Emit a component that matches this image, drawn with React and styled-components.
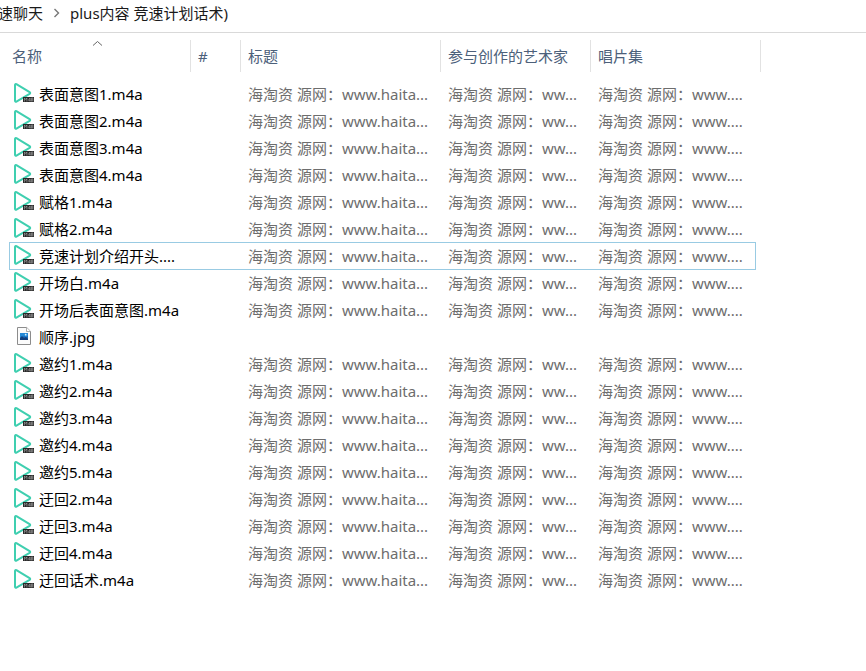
import React from "react";
import styled, { createGlobalStyle } from "styled-components";

const GlobalStyle = createGlobalStyle`
  * { box-sizing: border-box; }
  body {
    margin: 0;
    background: #fff;
    color: #000;
    font: 15px/20px "Noto Sans", "Noto Sans CJK SC", sans-serif;
  }
  button {
    padding: 0;
    border: 0;
    background: none;
    color: inherit;
    font: inherit;
  }
`;

const Window = styled.main`
  min-height: 100vh;
`;

const PathBar = styled.nav`
  display: flex;
  align-items: center;
  height: 33px;
  padding-bottom: 6px;
  margin-left: -2px;
  border-bottom: 1px solid #d9d9d9;
  color: #1a1a1a;
  white-space: nowrap;
`;

const Separator = styled.svg`
  width: 9px;
  height: 10px;
  margin: 0 9px;
`;

const FileTable = styled.table`
  width: 761px;
  margin-top: 7px;
  table-layout: fixed;
  border-collapse: separate;
  border-spacing: 0;
  white-space: nowrap;
`;

const Column = styled.col`
  width: ${(p) => p.$width}px;
`;

const HeaderCell = styled.th`
  position: relative;
  height: 32px;
  padding: 0 0 0 ${(p) => (p.$first ? 12 : 7)}px;
  border-right: 1px solid #e2e2e2;
  color: #4c607a;
  font-weight: 400;
  text-align: left;
`;

const SortArrow = styled.svg`
  position: absolute;
  top: 0;
  left: 50%;
  width: 11px;
  height: 7px;
  margin-left: -3px;
`;

const Rows = styled.tbody`
  &::before {
    content: "";
    display: table-row;
    height: 8px;
  }
`;

const Row = styled.tr`
  position: relative;
  &::after {
    content: "";
    display: ${(p) => (p.$focused ? "block" : "none")};
    position: absolute;
    inset: 0 5px -1px 9px;
    border: 1px solid #99cbe3;
    pointer-events: none;
  }
`;

const Cell = styled.td`
  height: 27px;
  padding: 0 0 0 7px;
  color: #6d6d6d;
  overflow: hidden;
`;

const NameCell = styled(Cell)`
  padding-left: 12px;
  color: #000;
`;

const FileName = styled.div`
  display: flex;
  align-items: center;
  gap: 4px;
`;

const FileIcon = styled.svg`
  flex: none;
  width: 23px;
  height: 22px;
`;

function AudioIcon() {
  return (
    <FileIcon viewBox="0 0 23 22" aria-hidden="true">
      <path
        d="M3 2v15.8c0 .9.7 1.3 1.4.8L17.6 10.8c.8-.5.8-1.2 0-1.7L4.4 1.2C3.7.8 3 1.1 3 2z"
        fill="#fff"
        stroke="#3fcfb0"
        strokeWidth="2"
        strokeLinejoin="round"
      />
      <rect x="11" y="14" width="11" height="5" fill="#292929" />
      <path
        d="M12.5 18.5v-3.5l1.2 1.5 1.2-1.5v3.5M18 18.5V15l-1.6 2.3h2.2M19.4 18.5V15h1.5v3.5M19.4 17h1.5"
        fill="none"
        stroke="#c4c4c4"
        strokeWidth=".5"
      />
    </FileIcon>
  );
}

function ImageIcon() {
  return (
    <FileIcon viewBox="0 0 23 22" aria-hidden="true">
      <path d="M5.5 1.5h9.2l3.8 3.8v13.2h-13z" fill="#fbfbfb" stroke="#8c8c8c" />
      <path d="M14.5 1.5v4h4" fill="#fff" stroke="#9b9b9b" strokeWidth=".8" />
      <rect x="8" y="7" width="8" height="7" fill="#1768b8" />
      <path d="M8 7h8v3l-2 1-2-1-4 3z" fill="#2488d6" />
      <path d="M8 14v-2l2-2 2 2 2-1 2 2v1z" fill="#123e7c" />
      <circle cx="13.7" cy="8.7" r=".9" fill="#d8effc" />
    </FileIcon>
  );
}

const columns = [
  { title: "名称", width: 191 },
  { title: "#", width: 50 },
  { title: "标题", width: 200 },
  { title: "参与创作的艺术家", width: 150 },
  { title: "唱片集", width: 170 },
];

const tags = [
  "海淘资 源网：www.haita...",
  "海淘资 源网：ww...",
  "海淘资 源网：www....",
];

const files = [
  "表面意图1.m4a",
  "表面意图2.m4a",
  "表面意图3.m4a",
  "表面意图4.m4a",
  "赋格1.m4a",
  "赋格2.m4a",
  "竞速计划介绍开头....",
  "开场白.m4a",
  "开场后表面意图.m4a",
  "顺序.jpg",
  "邀约1.m4a",
  "邀约2.m4a",
  "邀约3.m4a",
  "邀约4.m4a",
  "邀约5.m4a",
  "迂回2.m4a",
  "迂回3.m4a",
  "迂回4.m4a",
  "迂回话术.m4a",
];

const focusedFile = "竞速计划介绍开头....";

export default function App() {
  return (
    <Window lang="zh-CN">
      <GlobalStyle />
      <PathBar>
        <button type="button">速聊天</button>
        <Separator viewBox="0 0 9 10" aria-hidden="true">
          <path d="M2.5 1l4 4-4 4" fill="none" stroke="#777" strokeWidth="1.4" />
        </Separator>
        <button type="button">plus内容 竞速计划话术)</button>
      </PathBar>
      <FileTable>
        <colgroup>
          {columns.map((c) => (
            <Column key={c.title} $width={c.width} />
          ))}
        </colgroup>
        <thead>
          <tr>
            {columns.map((c, i) => (
              <HeaderCell key={c.title} scope="col" $first={i === 0}>
                {i === 0 && (
                  <SortArrow viewBox="0 0 11 7" aria-hidden="true">
                    <path d="M1 5.5l4.5-4 4.5 4" fill="none" stroke="#666" />
                  </SortArrow>
                )}
                <button type="button">{c.title}</button>
              </HeaderCell>
            ))}
          </tr>
        </thead>
        <Rows>
          {files.map((name) => {
            const isImage = name.endsWith(".jpg");
            return (
              <Row key={name} $focused={name === focusedFile}>
                <NameCell>
                  <FileName>
                    {isImage ? <ImageIcon /> : <AudioIcon />}
                    {name}
                  </FileName>
                </NameCell>
                <Cell />
                {tags.map((tag) => (
                  <Cell key={tag}>{isImage ? "" : tag}</Cell>
                ))}
              </Row>
            );
          })}
        </Rows>
      </FileTable>
    </Window>
  );
}
